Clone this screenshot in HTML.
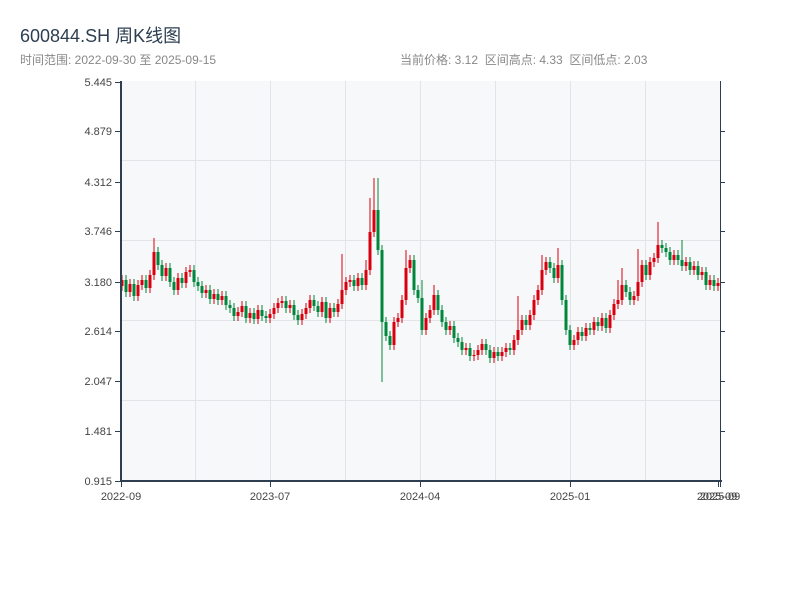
<!DOCTYPE html>
<html><head><meta charset="utf-8"><style>
body{margin:0;width:800px;height:600px;background:#fff;font-family:"Liberation Sans","Noto Sans CJK SC",sans-serif;position:relative;overflow:hidden}
.t{position:absolute;left:20px;top:22px;font-size:18px;color:#2c3e50}
.s{position:absolute;left:20px;top:51px;font-size:12px;color:#888}
.r{position:absolute;left:400px;top:51px;font-size:12px;color:#888}
</style></head><body>
<div class="t">600844.SH 周K线图</div>
<div class="s">时间范围: 2022-09-30 至 2025-09-15</div>
<div class="r">当前价格: 3.12&nbsp;&nbsp;区间高点: 4.33&nbsp;&nbsp;区间低点: 2.03</div>
<svg width="800" height="600" style="position:absolute;left:0;top:0" font-family="Liberation Sans,sans-serif" font-size="11" fill="#333">
<rect x="121" y="81" width="599" height="400" fill="#f7f8fa"/>
<g stroke="#e2e4e8" stroke-width="1">
<line x1="195.5" y1="81" x2="195.5" y2="481"/><line x1="270.5" y1="81" x2="270.5" y2="481"/><line x1="345.5" y1="81" x2="345.5" y2="481"/><line x1="420.5" y1="81" x2="420.5" y2="481"/><line x1="495.5" y1="81" x2="495.5" y2="481"/><line x1="570.5" y1="81" x2="570.5" y2="481"/><line x1="645.5" y1="81" x2="645.5" y2="481"/>
<line x1="121" y1="160.5" x2="720" y2="160.5"/><line x1="121" y1="240.5" x2="720" y2="240.5"/><line x1="121" y1="320.5" x2="720" y2="320.5"/><line x1="121" y1="400.5" x2="720" y2="400.5"/>
</g>
<path stroke="#d7000f" stroke-width="3" fill="none" d="M122,280V286M130,284V292M138,285V296M142,280V285M150,275V288M154,252V275M166,268V276M178,278V290M186,272V283M190,270V272M206,290V293M214,294V299M222,296V300M238,312V316M242,306V312M250,313V318M258,310V319M270,314V318M274,308V314M278,303V308M282,301V303M290,305V308M302,314V320M306,308V314M310,300V308M322,302V312M330,308V318M338,304V312M342,290V304M346,282V290M350,280V282M358,278V286M366,270V285M370,232V270M374,210V232M394,322V345M398,318V322M402,300V318M406,268V300M410,260V268M426,318V330M430,310V318M434,295V310M450,326V330M466,348V350M474,355V356M478,350V355M482,344V350M494,352V358M502,352V356M506,348V352M514,340V350M518,330V340M522,320V330M530,315V325M534,300V315M538,290V300M542,270V290M546,262V270M558,265V278M574,340V345M578,332V340M586,328V336M594,322V330M602,318V326M610,315V328M614,304V315M618,300V304M622,285V300M634,296V300M638,282V296M642,265V282M650,262V275M654,258V262M658,245V258M674,255V260M686,262V266M694,266V270M702,272V275M710,280V285M718,283V286"/>
<path stroke="#d7000f" stroke-width="1" fill="none" d="M122,275V291M130,279V297M138,280V301M142,275V290M150,270V293M154,238V280M166,263V281M178,273V295M186,267V288M190,265V277M206,285V298M214,289V304M222,291V305M238,307V321M242,301V317M250,308V323M258,305V324M270,309V323M274,303V319M278,298V313M282,296V308M290,300V313M302,309V325M306,303V319M310,295V313M322,297V317M330,303V323M338,299V317M342,254V309M346,277V295M350,275V287M358,273V291M366,260V290M370,198V275M374,178V237M394,317V350M398,313V327M402,295V323M406,250V305M410,255V273M426,313V335M430,305V323M434,285V315M450,321V335M466,343V355M474,350V361M478,345V360M482,339V355M494,347V363M502,347V361M506,343V357M514,335V355M518,296V345M522,315V335M530,310V330M534,295V320M538,285V305M542,255V295M546,257V275M558,248V283M574,335V350M578,327V345M586,323V341M594,317V335M602,313V331M610,310V333M614,299V320M618,280V309M622,268V305M634,291V305M638,249V301M642,260V287M650,257V280M654,253V267M658,222V263M674,250V265M686,257V271M694,261V275M702,267V280M710,275V290M718,278V291"/>
<path stroke="#00873c" stroke-width="3" fill="none" d="M126,280V292M134,284V296M146,280V288M158,252V265M162,265V276M170,268V282M174,282V290M182,278V283M194,270V282M198,282V286M202,286V293M210,290V299M218,294V300M226,296V305M230,305V308M234,308V316M246,306V318M254,313V319M262,310V316M266,316V318M286,301V308M294,305V315M298,315V320M314,300V306M318,306V312M326,302V318M334,308V312M354,280V286M362,278V285M378,210V250M382,250V322M386,322V336M390,336V345M414,260V290M418,290V298M422,298V330M438,295V310M442,310V322M446,322V330M454,326V338M458,338V342M462,342V350M470,348V356M486,344V350M490,350V358M498,352V356M510,348V350M526,320V325M550,262V268M554,268V278M562,265V300M566,300V330M570,330V345M582,332V336M590,328V330M598,322V326M606,318V328M626,285V292M630,292V300M646,265V275M662,245V248M666,248V252M670,252V260M678,255V260M682,260V266M690,262V270M698,266V275M706,272V285M714,280V286"/>
<path stroke="#00873c" stroke-width="1" fill="none" d="M126,275V297M134,279V301M146,275V293M158,247V270M162,260V281M170,263V287M174,277V295M182,273V288M194,265V287M198,277V291M202,281V298M210,285V304M218,289V305M226,291V310M230,300V313M234,303V321M246,301V323M254,308V324M262,305V321M266,311V323M286,296V313M294,300V320M298,310V325M314,295V311M318,301V317M326,297V323M334,303V317M354,275V291M362,273V290M378,178V255M382,245V382M386,317V341M390,331V350M414,255V295M418,285V303M422,280V335M438,290V315M442,305V327M446,317V335M454,321V343M458,333V347M462,337V355M470,343V361M486,339V355M490,345V363M498,347V361M510,343V355M526,315V330M550,257V273M554,263V283M562,260V305M566,295V335M570,325V350M582,327V341M590,323V335M598,317V331M606,313V333M626,280V297M630,287V305M646,260V280M662,240V253M666,243V257M670,247V265M678,250V265M682,240V271M690,257V275M698,261V280M706,267V290M714,275V291"/>
<g stroke="#2c3e50" stroke-width="2"><line x1="121" y1="81" x2="121" y2="482"/><line x1="120" y1="481" x2="722" y2="481"/></g>
<line x1="720.5" y1="81" x2="720.5" y2="481" stroke="#2c3e50" stroke-width="1"/>
<g stroke="#2c3e50" stroke-width="1">
<line x1="115" y1="82.5" x2="121" y2="82.5"/><line x1="115" y1="131.5" x2="121" y2="131.5"/><line x1="115" y1="182.5" x2="121" y2="182.5"/><line x1="115" y1="231.5" x2="121" y2="231.5"/><line x1="115" y1="282.5" x2="121" y2="282.5"/><line x1="115" y1="331.5" x2="121" y2="331.5"/><line x1="115" y1="381.5" x2="121" y2="381.5"/><line x1="115" y1="431.5" x2="121" y2="431.5"/><line x1="115" y1="481.5" x2="121" y2="481.5"/>
<line x1="720" y1="131.5" x2="725" y2="131.5"/><line x1="720" y1="182.5" x2="725" y2="182.5"/><line x1="720" y1="231.5" x2="725" y2="231.5"/><line x1="720" y1="282.5" x2="725" y2="282.5"/><line x1="720" y1="331.5" x2="725" y2="331.5"/><line x1="720" y1="381.5" x2="725" y2="381.5"/><line x1="720" y1="431.5" x2="725" y2="431.5"/>
<line x1="121.5" y1="481" x2="121.5" y2="487"/><line x1="270.5" y1="481" x2="270.5" y2="487"/><line x1="420.5" y1="481" x2="420.5" y2="487"/><line x1="570.5" y1="481" x2="570.5" y2="487"/><line x1="718.5" y1="481" x2="718.5" y2="487"/><line x1="720.5" y1="481" x2="720.5" y2="487"/>
</g>
<g text-anchor="end" fill="#444">
<text x="112" y="86">5.445</text><text x="112" y="135">4.879</text><text x="112" y="186">4.312</text><text x="112" y="235">3.746</text><text x="112" y="286">3.180</text><text x="112" y="335">2.614</text><text x="112" y="385">2.047</text><text x="112" y="435">1.481</text><text x="112" y="485">0.915</text>
</g>
<g text-anchor="middle" fill="#444">
<text x="121" y="500">2022-09</text><text x="270" y="500">2023-07</text><text x="420" y="500">2024-04</text><text x="570" y="500">2025-01</text><text x="717" y="500">2025-09</text><text x="720" y="500">2025-09</text>
</g>
</svg>
</body></html>
